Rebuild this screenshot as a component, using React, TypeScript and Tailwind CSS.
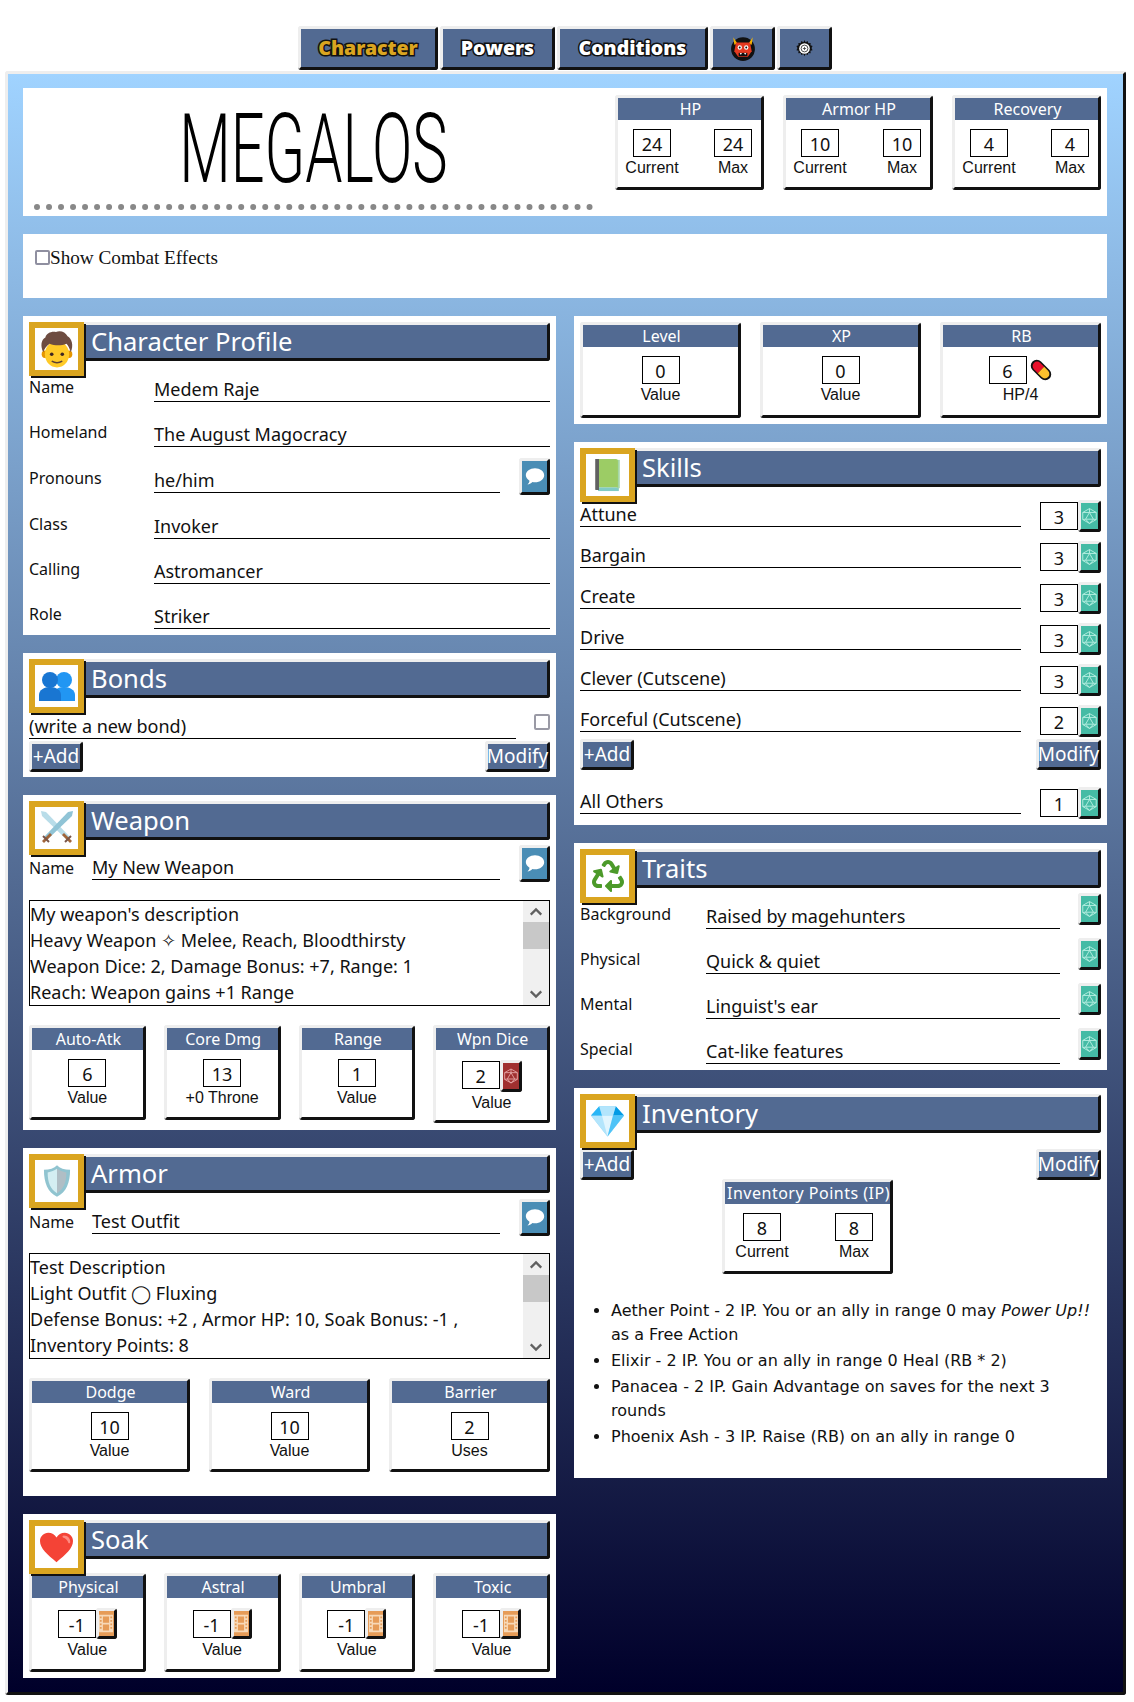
import type { ReactNode } from "react";
import { FaRecycle } from "react-icons/fa";

const sans = "font-['Noto_Sans',sans-serif]";
const arial = "font-['Liberation_Sans',Arial,sans-serif]";
const outset = "border-[3px] border-t-[#eeeeee] border-l-[#eeeeee] border-r-[#111111] border-b-[#111111] rounded-[3px]";

function PersonIcon() {
  return (
    <svg viewBox="0 0 36 36" className="h-[38px] w-[38px]">
      <ellipse cx="6.500" cy="23" rx="3" ry="3.500" fill="#e59600" />
      <ellipse cx="29.500" cy="23" rx="3" ry="3.500" fill="#e59600" />
      <ellipse cx="18" cy="23" rx="11.500" ry="12.500" fill="#ffca28" />
      <path d="M5 21C2 15 3 9 7 7c1-4 6-6 10-5 4-2 9 0 11 4 4 2 6 9 3 15-1-3-2-6-4-8-5 2-11 2-16 0-3 2-5 5-6 8z" fill="#6d4c41" />
      <circle cx="13" cy="23" r="1.700" fill="#3e2723" />
      <circle cx="23" cy="23" r="1.700" fill="#3e2723" />
      <path d="M13 29.500c3 1.800 7 1.800 10 0" fill="none" stroke="#5d4037" strokeWidth="1.300" />
    </svg>
  );
}

function BondsIcon() {
  return (
    <svg viewBox="0 0 36 30" className="h-[32px] w-[36px]">
      <circle cx="25" cy="9" r="8" fill="#2196f3" />
      <path d="M14 30v-6c0-5 5-8 11-8s11 3 11 8v6z" fill="#2196f3" />
      <circle cx="11" cy="9" r="8" fill="#1976d2" />
      <path d="M0 30v-6c0-5 5-8 11-8s11 3 11 8v6z" fill="#1976d2" />
    </svg>
  );
}

function SwordsIcon() {
  return (
    <svg viewBox="0 0 36 36" className="h-[36px] w-[36px]">
      <path d="M2 1l5 1 24 25-3 3L3 6z" fill="#b9dde9" />
      <path d="M34 1l-5 1L5 27l3 3 25-24z" fill="#90c4d6" />
      <path d="M3 31l8-8 2 2-8 8z" fill="#a1653a" />
      <path d="M33 31l-8-8-2 2 8 8z" fill="#a1653a" />
      <path d="M4 26l6 6" stroke="#795548" strokeWidth="2" />
      <path d="M32 26l-6 6" stroke="#795548" strokeWidth="2" />
    </svg>
  );
}

function ShieldIcon() {
  return (
    <svg viewBox="0 0 30 36" className="h-[34px] w-[28px]">
      <path d="M15 1c3 3 8 5 14 5 0 14-4 24-14 29C5 30 1 20 1 6c6 0 11-2 14-5z" fill="#90c4d0" />
      <path d="M15 5c3 2 6 3 10 4 0 11-3 18-10 22z" fill="#b0bec5" />
      <path d="M15 5c-3 2-6 3-10 4 0 11 3 18 10 22z" fill="#d4eef2" />
    </svg>
  );
}

function HeartIcon() {
  return (
    <svg viewBox="0 0 36 32" className="h-[31px] w-[33px]">
      <path d="M18 32C8 24 0 17 0 9c0-5 4-9 9-9 4 0 7 2 9 5 2-3 5-5 9-5 5 0 9 4 9 9 0 8-8 15-18 23z" fill="#f44336" />
      <path d="M26 3c4 0 7 3 7 7 0 1-1 2-2 1-1-3-3-5-6-6-1-1 0-2 1-2z" fill="#ff8a80" />
    </svg>
  );
}

function BookIcon() {
  return (
    <svg viewBox="0 0 28 36" className="h-[34px] w-[27px]">
      <path d="M4 31h22v4H4z" fill="#80cbc4" />
      <path d="M24 2h3v30h-3z" fill="#a5d6a7" />
      <path d="M1 1h4v33H2a1 1 0 0 1-1-1z" fill="#616161" />
      <path d="M5 1h18a2 2 0 0 1 2 2v28H5z" fill="#9ccc65" />
    </svg>
  );
}

function GemIcon() {
  return (
    <svg viewBox="0 0 36 34" className="h-[32px] w-[33px]">
      <path d="M9 1h18l9 10-18 23L0 11z" fill="#81d4fa" />
      <path d="M0 11h36L18 34z" fill="#b3e5fc" />
      <path d="M12 11h12l-6 23z" fill="#e1f5fe" />
      <path d="M9 1l3 10H0z" fill="#29b6f6" />
      <path d="M27 1l-3 10h12z" fill="#039be5" />
      <path d="M9 1h18l-3 10H12z" fill="#b3e5fc" />
      <path d="M24 11h12L18 34z" fill="#4fc3f7" />
    </svg>
  );
}

function OgreIcon() {
  return (
    <svg viewBox="0 0 24 24" className="h-[26px] w-[26px]">
      <circle cx="12" cy="13" r="11" fill="#111" />
      <path d="M3 2l4 6-3 1zM21 2l-4 6 3 1z" fill="#f5b400" />
      <path d="M5.500 7h13l1.500 8-3.500 5h-9L4 15z" fill="#e53a20" />
      <circle cx="9" cy="11.500" r="2" fill="#fff" />
      <circle cx="15" cy="11.500" r="2" fill="#fff" />
      <circle cx="9" cy="11.500" r=".9" fill="#111" />
      <circle cx="15" cy="11.500" r=".9" fill="#111" />
      <path d="M8 16.500h8v3H8z" fill="#111" />
      <path d="M9 16.500l1 2 1-2zM13 16.500l1 2 1-2z" fill="#fff" />
    </svg>
  );
}

function GearIcon() {
  return (
    <svg viewBox="0 0 16 16" className="h-[17px] w-[17px]">
      <path d="M8 0l1 2 2-1 .6 2 2.200-.2-.2 2.200 2 .6-1 2 1 2-2 .6.2 2.200-2.200-.2-.6 2-2-1-1 2-1-2-2 1-.6-2-2.200.2.2-2.200-2-.6 1-2-1-2 2-.6-.2-2.200 2.200.2.6-2 2 1z" fill="#111" />
      <circle cx="8" cy="8" r="5" fill="#fff" />
      <circle cx="8" cy="8" r="3.200" fill="none" stroke="#333" strokeWidth=".8" />
      <path d="M8 6.500v3M6.500 8h3" stroke="#333" strokeWidth=".7" />
    </svg>
  );
}

function PillIcon() {
  return (
    <svg viewBox="0 0 24 24" className="h-[24px] w-[24px] shrink-0">
      <g transform="rotate(45 12 12)">
        <rect x="0" y="6" width="24" height="12" rx="6" fill="#111" />
        <path d="M12 7.500H6.500a4.500 4.500 0 0 0 0 9H12z" fill="#e8102a" />
        <path d="M12 7.500h5.500a4.500 4.500 0 0 1 0 9H12z" fill="#fbc02d" />
      </g>
    </svg>
  );
}

function DiceIcon({ color = "#b8efe2" }: { color?: string }) {
  return (
    <svg viewBox="0 0 24 24" className="h-[20px] w-[18px]" fill="none" stroke={color} strokeWidth="1.300">
      <path d="M12 1.500l9.500 5.500v10L12 22.500 2.500 17V7z" />
      <path d="M12 7l5.500 9.500h-11z" />
      <path d="M2.500 7L12 7l9.500 0M2.500 17l4-.5M21.500 17l-4-.5M12 22.500l-5.500-6M12 22.500l5.500-6M12 1.500V7" />
    </svg>
  );
}

function FilmIcon() {
  return (
    <svg viewBox="0 0 16 20" className="h-[21px] w-[14px]">
      <path d="M0 0h16v20H0z" fill="#f7d9b8" />
      <path d="M4.500 2h7v7h-7zM4.500 11h7v7h-7z" fill="#e69c58" />
      <path d="M1 2h2v2H1zM1 6h2v2H1zM1 10h2v2H1zM1 14h2v2H1zM13 2h2v2h-2zM13 6h2v2h-2zM13 10h2v2h-2zM13 14h2v2h-2z" fill="#e69c58" />
    </svg>
  );
}

function NoteButton() {
  return (
    <div className={`${outset} -mb-[2px] ml-auto flex h-[37px] w-[31px] shrink-0 items-center justify-center bg-[#4a8db5]`}>
      <svg viewBox="0 0 24 22" className="h-[19px] w-[20px]">
        <path d="M12 1c6 0 11 3.600 11 8.500S18 18 12 18c-1 0-2 0-3-.3C7 19.500 5 20.500 3 20.500c1.500-1.500 2.300-3 2.400-4.500C2.800 14.500 1 12.200 1 9.500 1 4.600 6 1 12 1z" fill="#fff" />
      </svg>
    </div>
  );
}

function RollButton() {
  return (
    <div className={`${outset} flex h-[32px] w-[23px] shrink-0 items-center justify-center bg-[#45bba5]`}>
      <DiceIcon />
    </div>
  );
}

function ActionButton({ label }: { label: string }) {
  return (
    <div className={`${outset} ${sans} flex h-[31px] shrink-0 items-center justify-center bg-[#526a92] px-px text-[19px] leading-none text-white`}>
      {label}
    </div>
  );
}

function ActionRow({ className = "" }: { className?: string }) {
  return (
    <div className={`flex justify-between ${className}`}>
      <div className="w-[54px]">
        <ActionButton label="+Add" />
      </div>
      <div className="w-[65px]">
        <ActionButton label="Modify" />
      </div>
    </div>
  );
}

function ValueBox({ value }: { value: string }) {
  return (
    <div className={`${sans} flex h-[28px] w-[38px] shrink-0 items-center justify-center border border-black bg-white pt-[2px] text-[18px] leading-none text-[#111]`}>
      {value}
    </div>
  );
}

function Caption({ children }: { children: ReactNode }) {
  return <div className={`${arial} text-center text-[16px] leading-[22px] text-[#111]`}>{children}</div>;
}

function Card({ title, className = "", titleClass = "", children }: { title: string; className?: string; titleClass?: string; children: ReactNode }) {
  return (
    <div className={`${outset} bg-white ${className}`}>
      <div className={`${sans} flex h-[22px] items-center justify-center bg-[#526a92] pl-[2px] text-[16px] leading-none whitespace-nowrap text-white ${titleClass}`}>
        {title}
      </div>
      {children}
    </div>
  );
}

function Single({ title, value, caption, className = "h-[95px]" }: { title: string; value: string; caption: string; className?: string }) {
  return (
    <Card title={title} className={className}>
      <div className="flex flex-col items-center pt-[9px]">
        <ValueBox value={value} />
        <Caption>{caption}</Caption>
      </div>
    </Card>
  );
}

function Pair({ title, cur, max, className, inner = "pr-[9px] pl-[8px]", titleClass = "" }: { title: string; cur: string; max: string; className: string; inner?: string; titleClass?: string }) {
  return (
    <Card title={title} className={className} titleClass={titleClass}>
      <div className={`flex justify-between pt-[9px] ${inner}`}>
        <div className="flex w-[52px] flex-col items-center">
          <ValueBox value={cur} />
          <Caption>Current</Caption>
        </div>
        <div className="flex w-[38px] flex-col items-center">
          <ValueBox value={max} />
          <Caption>Max</Caption>
        </div>
      </div>
    </Card>
  );
}

function SoakCard({ title }: { title: string }) {
  return (
    <Card title={title} className="h-[99px]">
      <div className="flex flex-col items-center pt-[10px]">
        <div className="flex items-center">
          <ValueBox value="-1" />
          <div className={`${outset} flex h-[31px] w-[21px] items-center justify-center bg-[#e69c58]`}>
            <FilmIcon />
          </div>
        </div>
        <Caption>Value</Caption>
      </div>
    </Card>
  );
}

function Title({ icon, title }: { icon: ReactNode; title: string }) {
  return (
    <div className="flex h-[54px] items-start">
      <div className="relative z-10 flex h-[54px] w-[55px] shrink-0 items-center justify-center border-[6px] border-[#daa520] bg-white shadow-[2px_2px_0_#111]">
        {icon}
      </div>
      <div className={`${outset} ${sans} flex h-[39px] flex-1 items-center rounded-l-none border-l-0 bg-[#526a92] pl-[7px] text-[25.6px] leading-none text-white`}>
        {title}
      </div>
    </div>
  );
}

function Underlined({ text, className = "" }: { text: string; className?: string }) {
  return (
    <div className={`${sans} flex h-[28px] items-end border-b border-black text-[18px] leading-[24px] whitespace-nowrap text-[#111] ${className}`}>
      {text}
    </div>
  );
}

function Label({ text, className }: { text: string; className: string }) {
  return <div className={`${sans} shrink-0 text-[16px] leading-[24px] text-[#111] ${className}`}>{text}</div>;
}

function Description({ lines }: { lines: ReactNode[] }) {
  return (
    <div className="flex border border-black">
      <div className={`${sans} flex-1 overflow-hidden text-[18px] leading-[26px] whitespace-nowrap text-[#111]`}>
        {lines.map((line, i) => (
          <div key={i}>{line}</div>
        ))}
      </div>
      <div className="flex w-[26px] shrink-0 flex-col items-center bg-[#f0f0f0]">
        <svg viewBox="0 0 16 10" className="mt-[6px] h-[10px] w-[14px]" fill="none" stroke="#606060" strokeWidth="2.600">
          <path d="M2 8l6-6 6 6" />
        </svg>
        <div className="mt-[5px] h-[27px] w-full bg-[#c8c8c8]" />
        <div className="flex-1" />
        <svg viewBox="0 0 16 10" className="mb-[6px] h-[10px] w-[14px]" fill="none" stroke="#606060" strokeWidth="2.600">
          <path d="M2 2l6 6 6-6" />
        </svg>
      </div>
    </div>
  );
}

const profile = [
  { label: "Name", value: "Medem Raje", mt: "-mt-[2px]" },
  { label: "Homeland", value: "The August Magocracy", mt: "mt-[17px]" },
  { label: "Pronouns", value: "he/him", mt: "mt-[18px]", note: true },
  { label: "Class", value: "Invoker", mt: "mt-[18px]" },
  { label: "Calling", value: "Astromancer", mt: "mt-[17px]" },
  { label: "Role", value: "Striker", mt: "mt-[17px]" },
];

const skills = [
  { name: "Attune", value: "3" },
  { name: "Bargain", value: "3" },
  { name: "Create", value: "3" },
  { name: "Drive", value: "3" },
  { name: "Clever (Cutscene)", value: "3" },
  { name: "Forceful (Cutscene)", value: "2" },
];

const traits = [
  { label: "Background", value: "Raised by magehunters" },
  { label: "Physical", value: "Quick & quiet" },
  { label: "Mental", value: "Linguist's ear" },
  { label: "Special", value: "Cat-like features" },
];

function SkillRow({ name, value }: { name: string; value: string }) {
  return (
    <div className="flex h-[32px] items-end">
      <Underlined text={name} className="mb-[5px] w-[442px]" />
      <div className="mb-[2px] ml-[19px]">
        <ValueBox value={value} />
      </div>
      <div className="ml-auto self-start">
        <RollButton />
      </div>
    </div>
  );
}

export default function App() {
  return (
    <div className="min-h-[1702px] bg-white">
      <div className={`${sans} flex gap-[2px] pt-[26px] pl-[298px] text-[19.5px] leading-none font-black text-white [-webkit-text-stroke:3px_#111] [paint-order:stroke_fill]`}>
        <div className={`${outset} flex h-[44px] w-[140px] items-center justify-center bg-[#526a92] text-[#daa520]`}>Character</div>
        <div className={`${outset} flex h-[44px] w-[115px] items-center justify-center bg-[#526a92]`}>Powers</div>
        <div className={`${outset} flex h-[44px] w-[151px] items-center justify-center bg-[#526a92]`}>Conditions</div>
        <div className={`${outset} flex h-[44px] w-[65px] items-center justify-center bg-[#526a92]`}>
          <OgreIcon />
        </div>
        <div className={`${outset} flex h-[44px] w-[55px] items-center justify-center bg-[#526a92]`}>
          <GearIcon />
        </div>
      </div>

      <div className="mt-px ml-[5px] h-[1624px] w-[1121px] rounded-[3px] border-[3px] border-t-[#eeeeee] border-r-[#111111] border-b-[#111111] border-l-[#eeeeee] bg-[linear-gradient(#a0d3ff,#526a92_50%,#00002a)] pt-[14px] pr-[16px] pl-[15px]">
        <div className="flex h-[128px] items-start bg-white pt-[7px] pr-[6px]">
          <div className="-mt-[7px] ml-[11px] flex h-[122px] w-[559px] items-center justify-center overflow-hidden border-b-[6px] border-dotted border-[#888888] pt-[6px]">
            <span className="inline-block origin-center scale-x-[0.62] font-['Roboto',sans-serif] text-[96px] leading-none font-light text-black">MEGALOS</span>
          </div>
          <div className="ml-auto flex gap-[19px]">
            <Pair title="HP" cur="24" max="24" className="h-[95px] w-[149px]" />
            <Pair title="Armor HP" cur="10" max="10" className="h-[95px] w-[150px]" />
            <Pair title="Recovery" cur="4" max="4" className="h-[95px] w-[149px]" />
          </div>
        </div>

        <div className="mt-[18px] flex h-[64px] items-start bg-white pt-[13px] pl-[12px]">
          <div className="mt-[3px] h-[15px] w-[15px] rounded-[2px] border-2 border-[#8f8fa0]" />
          <span className="font-['Liberation_Serif',serif] text-[19.2px] leading-[22px] text-[#111]">Show Combat Effects</span>
        </div>

        <div className="mt-[18px] flex gap-[18px]">
          <div className="flex w-[533px] flex-col gap-[18px]">
            <section className="h-[319px] bg-white p-[6px]">
              <Title icon={<PersonIcon />} title="Character Profile" />
              {profile.map((row) => (
                <div key={row.label} className={`flex h-[28px] items-start ${row.mt}`}>
                  <Label text={row.label} className="w-[125px] pt-[1px]" />
                  <Underlined text={row.value} className={row.note ? "w-[346px]" : "flex-1"} />
                  {row.note && (
                    <div className="ml-auto self-end">
                      <NoteButton />
                    </div>
                  )}
                </div>
              ))}
            </section>

            <section className="h-[124px] bg-white p-[6px]">
              <Title icon={<BondsIcon />} title="Bonds" />
              <div className="-mt-[2px] flex items-start">
                <Underlined text="(write a new bond)" className="w-[487px]" />
                <div className="mt-[3px] ml-auto h-[16px] w-[16px] rounded-[2px] border-2 border-[#9a9aa5]" />
              </div>
              <ActionRow className="mt-[2px]" />
            </section>

            <section className="h-[335px] bg-white p-[6px]">
              <Title icon={<SwordsIcon />} title="Weapon" />
              <div className="-mt-[3px] flex h-[28px] items-end">
                <Label text="Name" className="w-[63px]" />
                <Underlined text="My New Weapon" className="w-[408px]" />
                <NoteButton />
              </div>
              <div className="mt-[20px]">
                <Description
                  lines={[
                    "My weapon's description",
                    "Heavy Weapon ✧ Melee, Reach, Bloodthirsty",
                    "Weapon Dice: 2, Damage Bonus: +7, Range: 1",
                    "Reach: Weapon gains +1 Range",
                  ]}
                />
              </div>
              <div className="mt-[19px] grid grid-cols-4 items-start gap-[18px]">
                <Single title="Auto-Atk" value="6" caption="Value" />
                <Single title="Core Dmg" value="13" caption="+0 Throne" />
                <Single title="Range" value="1" caption="Value" />
                <Card title="Wpn Dice" className="h-[98px]">
                  <div className="flex flex-col items-center pt-[10px]">
                    <div className="flex items-start">
                      <div className="mt-px">
                        <ValueBox value="2" />
                      </div>
                      <div className={`${outset} flex h-[32px] w-[22px] items-center justify-center bg-[#a03030]`}>
                        <DiceIcon color="#e8a9a9" />
                      </div>
                    </div>
                    <Caption>Value</Caption>
                  </div>
                </Card>
              </div>
            </section>

            <section className="h-[348px] bg-white p-[6px]">
              <Title icon={<ShieldIcon />} title="Armor" />
              <div className="-mt-[2px] flex h-[28px] items-end">
                <Label text="Name" className="w-[63px]" />
                <Underlined text="Test Outfit" className="w-[408px]" />
                <NoteButton />
              </div>
              <div className="mt-[19px]">
                <Description
                  lines={[
                    "Test Description",
                    "Light Outfit ◯ Fluxing",
                    "Defense Bonus: +2 , Armor HP: 10, Soak Bonus: -1 ,",
                    "Inventory Points: 8",
                  ]}
                />
              </div>
              <div className="mt-[19px] grid grid-cols-3 gap-[19px]">
                <Single title="Dodge" value="10" caption="Value" className="h-[94px]" />
                <Single title="Ward" value="10" caption="Value" className="h-[94px]" />
                <Single title="Barrier" value="2" caption="Uses" className="h-[94px]" />
              </div>
            </section>

            <section className="h-[164px] bg-white p-[6px]">
              <Title icon={<HeartIcon />} title="Soak" />
              <div className="relative -mt-px grid grid-cols-4 gap-[18px]">
                <SoakCard title="Physical" />
                <SoakCard title="Astral" />
                <SoakCard title="Umbral" />
                <SoakCard title="Toxic" />
              </div>
            </section>
          </div>

          <div className="flex w-[533px] flex-col gap-[18px]">
            <section className="grid h-[108px] grid-cols-3 gap-[19px] bg-white p-[6px]">
              <Single title="Level" value="0" caption="Value" className="h-[96px]" />
              <Single title="XP" value="0" caption="Value" className="h-[96px]" />
              <Card title="RB" className="h-[96px]">
                <div className="flex flex-col items-center pt-[9px]">
                  <div className="flex items-center gap-[2px]">
                    <ValueBox value="6" />
                    <PillIcon />
                  </div>
                  <Caption>HP/4</Caption>
                </div>
              </Card>
            </section>

            <section className="h-[383px] bg-white p-[6px]">
              <Title icon={<BookIcon />} title="Skills" />
              <div className="-mt-[2px] flex flex-col gap-[9px]">
                {skills.map((s) => (
                  <SkillRow key={s.name} name={s.name} value={s.value} />
                ))}
              </div>
              <ActionRow className="mt-[2px]" />
              <div className="mt-[17px]">
                <SkillRow name="All Others" value="1" />
              </div>
            </section>

            <section className="h-[227px] bg-white p-[6px]">
              <Title icon={<FaRecycle className="h-[32px] w-[32px] text-[#4c9a2a]" />} title="Traits" />
              <div className="-mt-[10px] flex flex-col gap-[13px]">
                {traits.map((t) => (
                  <div key={t.label} className="flex h-[32px] items-end">
                    <Label text={t.label} className="-mb-[1px] w-[126px]" />
                    <Underlined text={t.value} className="-mb-[4px] w-[354px]" />
                    <div className="ml-auto self-start">
                      <RollButton />
                    </div>
                  </div>
                ))}
              </div>
            </section>

            <section className="h-[390px] bg-white p-[6px]">
              <Title icon={<GemIcon />} title="Inventory" />
              <ActionRow className="mt-[1px]" />
              <div className="-mt-[1px] flex justify-center pr-[66px]">
                <Pair title="Inventory Points (IP)" cur="8" max="8" className="h-[95px] w-[171px]" inner="pr-[17px] pl-[11px]" titleClass="tracking-[0.5px]" />
              </div>
              <ul className="mt-[25px] list-disc pl-[31px] font-['DejaVu_Sans',sans-serif] text-[16px] leading-[24px] text-[#111]">
                <li className="mb-[2px]">
                  Aether Point - 2 IP. You or an ally in range 0 may <em>Power Up!!</em> as a Free Action
                </li>
                <li className="mb-[2px]">Elixir - 2 IP. You or an ally in range 0 Heal (RB * 2)</li>
                <li className="mb-[2px]">Panacea - 2 IP. Gain Advantage on saves for the next 3 rounds</li>
                <li>Phoenix Ash - 3 IP. Raise (RB) on an ally in range 0</li>
              </ul>
            </section>
          </div>
        </div>
      </div>
    </div>
  );
}
